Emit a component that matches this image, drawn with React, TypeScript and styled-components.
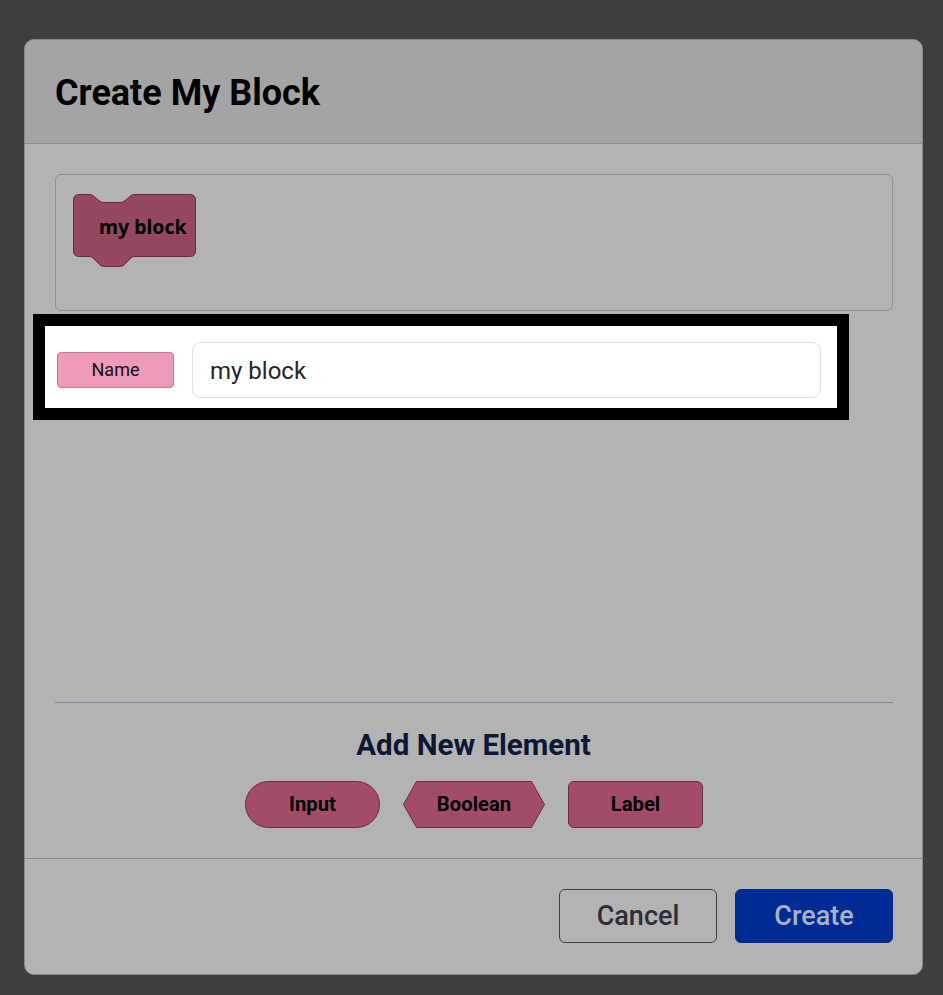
import React from "react";
import styled, { createGlobalStyle } from "styled-components";

const Global = createGlobalStyle`
  html, body { margin: 0; padding: 0; background: #3e3e3e; }
  body { font-family: Roboto, "Liberation Sans", sans-serif; }
  * { box-sizing: border-box; }
`;

const Page = styled.div`
  width: 943px;
  height: 995px;
  padding: 39px 0 0 24px;
  background: #3e3e3e;
`;

const Modal = styled.div`
  width: 899px;
  height: 936px;
  background: #b3b3b3;
  border: 1px solid #868994;
  border-radius: 10px;
  overflow: hidden;
  display: flex;
  flex-direction: column;
`;

const Header = styled.header`
  height: 104px;
  background: #a4a4a4;
  border-bottom: 1px solid #8a8e98;
  display: flex;
  align-items: center;
  padding: 2px 0 0 30px;
`;

const Title = styled.h1`
  margin: 0;
  font-family: Roboto, "Liberation Sans", sans-serif;
  font-weight: 700;
  font-size: 36px;
  line-height: 42px;
  color: #000;
`;

const Body = styled.div`
  flex: 1;
  display: flex;
  flex-direction: column;
  padding-top: 30px;
`;

const Preview = styled.div`
  margin: 0 29px 0 30px;
  height: 137px;
  border: 1px solid #909198;
  border-radius: 6px;
  padding: 19px 0 0 17px;
`;

const BlockWrap = styled.svg`
  display: block;
  overflow: visible;
`;

const BlockText = styled.text`
  font-family: "Noto Sans", "Open Sans", sans-serif;
  font-weight: 700;
  font-size: 19.5px;
  fill: #000;
`;

const Spotlight = styled.div`
  margin: 3px 0 0 8px;
  width: 816px;
  height: 106px;
  border: 12px solid #000;
  background: #fff;
  display: flex;
  align-items: center;
  gap: 18px;
  padding: 5px 16px 0 12px;
`;

const NameTag = styled.div`
  width: 117px;
  height: 36px;
  background: #ef9aba;
  border: 1px solid #c07a95;
  border-radius: 4px;
  display: flex;
  align-items: center;
  justify-content: center;
  font-size: 18px;
  color: #111;
  padding-bottom: 1px;
`;

const NameInput = styled.input`
  flex: 1;
  height: 56px;
  border: 1px solid #dfe0e6;
  border-radius: 9px;
  padding: 2px 0 0 17px;
  font-family: Roboto, "Liberation Sans", sans-serif;
  font-size: 24px;
  color: #24262b;
  background: #fff;
  outline: none;
`;

const Spacer = styled.div`
  flex: 1;
`;

const Divider = styled.hr`
  margin: 0 29px 0 30px;
  border: 0;
  border-top: 1px solid #878a9a;
`;

const AddSection = styled.section`
  display: flex;
  flex-direction: column;
  align-items: center;
  padding: 26px 0 30px;
  gap: 19px;
`;

const AddTitle = styled.h2`
  margin: 0;
  font-size: 29.5px;
  line-height: 33px;
  font-weight: 700;
  color: #0d1835;
`;

const ElementRow = styled.div`
  display: flex;
  gap: 23px;
  margin-left: 1px;
`;

const ElementButton = styled.button<{ $shape: "pill" | "rect" }>`
  width: 135px;
  height: 47px;
  background: #a24b6a;
  border: 1px solid #6c2c45;
  border-radius: ${(p) => (p.$shape === "pill" ? "24px" : "6px")};
  font-family: Roboto, "Liberation Sans", sans-serif;
  font-weight: 700;
  font-size: 20.25px;
  color: #000;
  padding: 0 0 2px;
`;

const HexButton = styled.button`
  position: relative;
  width: 142px;
  height: 47px;
  background: transparent;
  border: 0;
  padding: 0 0 2px;
  font-family: Roboto, "Liberation Sans", sans-serif;
  font-weight: 700;
  font-size: 20.25px;
  color: #000;
`;

const HexShape = styled.svg`
  position: absolute;
  inset: 0;
`;

const HexLabel = styled.span`
  position: relative;
`;

const Footer = styled.footer`
  border-top: 1px solid #878a9a;
  display: flex;
  justify-content: flex-end;
  gap: 18px;
  padding: 30px 29px 31px 0;
`;

const FooterButton = styled.button<{ $primary?: boolean }>`
  width: 158px;
  height: 54px;
  border-radius: 6px;
  font-family: Roboto, "Liberation Sans", sans-serif;
  font-weight: 500;
  font-size: 27px;
  background: ${(p) => (p.$primary ? "#012b94" : "transparent")};
  color: ${(p) => (p.$primary ? "#a9b1c3" : "#2a2f37")};
  border: 1px solid ${(p) => (p.$primary ? "#012b94" : "#3c4149")};
  padding: 0;
`;

const blockPath =
  "M0.5,5.5 A5,5 0 0 1 5.5,0.5 H16 c2.5,0 3.75,1 5,2 l5,4 c1.25,1 2.5,2 5,2 H47 c2.5,0 3.75,-1 5,-2 l5,-4 c1.25,-1 2.5,-2 5,-2 H117.5 A5,5 0 0 1 122.5,5.5 V57.5 A5,5 0 0 1 117.5,62.5 H62 c-2.5,0 -3.75,1.25 -5,2.5 l-5,5 c-1.25,1.25 -2.5,2.5 -5,2.5 H31 c-2.5,0 -3.75,-1.25 -5,-2.5 l-5,-5 c-1.25,-1.25 -2.5,-2.5 -5,-2.5 H5.5 A5,5 0 0 1 0.5,57.5 Z";

export default function App() {
  return (
    <>
      <Global />
      <Page>
        <Modal>
          <Header>
            <Title>Create My Block</Title>
          </Header>
          <Body>
            <Preview>
              <BlockWrap width="124" height="74" viewBox="0 0 124 74">
                <path d={blockPath} fill="#95475f" stroke="#6a2b40" strokeWidth="1" />
                <BlockText x="26" y="40">my block</BlockText>
              </BlockWrap>
            </Preview>
            <Spotlight>
              <NameTag>Name</NameTag>
              <NameInput defaultValue="my block" />
            </Spotlight>
            <Spacer />
            <Divider />
            <AddSection>
              <AddTitle>Add New Element</AddTitle>
              <ElementRow>
                <ElementButton $shape="pill">Input</ElementButton>
                <HexButton>
                  <HexShape width="142" height="47" viewBox="0 0 142 47">
                    <polygon
                      points="0.5,23.5 13.5,0.5 128.5,0.5 141.5,23.5 128.5,46.5 13.5,46.5"
                      fill="#a24b6a"
                      stroke="#6c2c45"
                      strokeWidth="1"
                    />
                  </HexShape>
                  <HexLabel>Boolean</HexLabel>
                </HexButton>
                <ElementButton $shape="rect">Label</ElementButton>
              </ElementRow>
            </AddSection>
          </Body>
          <Footer>
            <FooterButton>Cancel</FooterButton>
            <FooterButton $primary>Create</FooterButton>
          </Footer>
        </Modal>
      </Page>
    </>
  );
}
